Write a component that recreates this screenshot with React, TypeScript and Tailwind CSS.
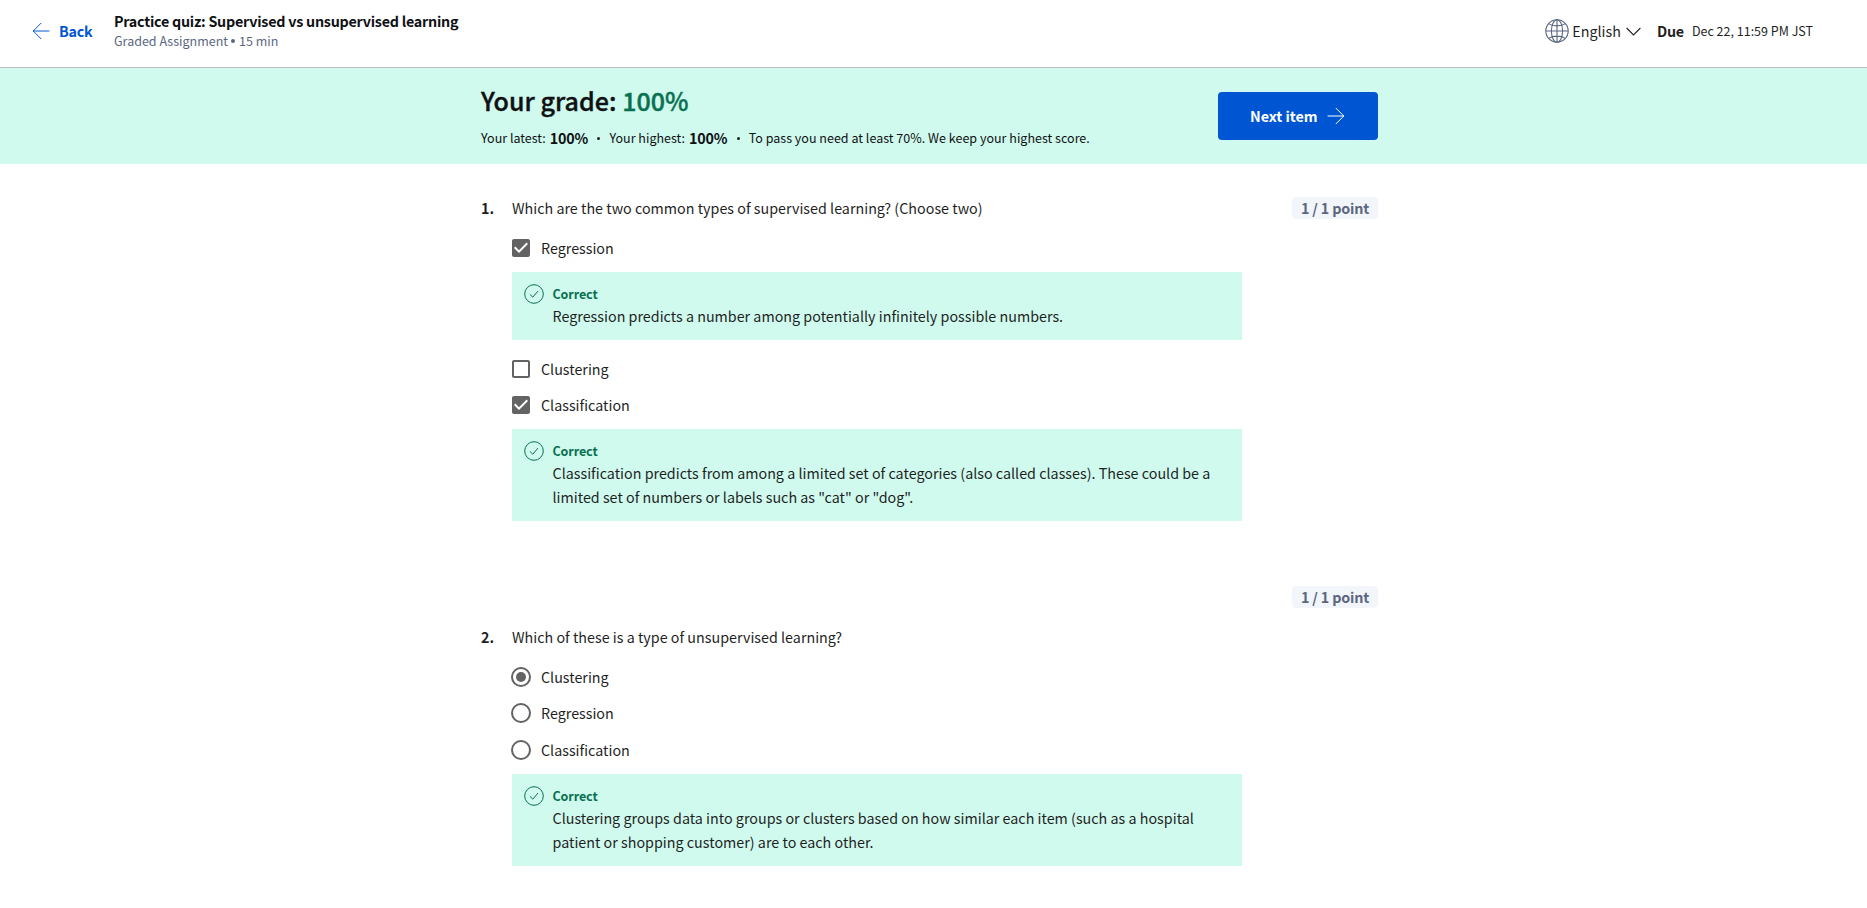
import type { ReactNode } from "react";

const GRAY = "#636363";

function CheckboxIcon({ checked }: { checked: boolean }) {
  return (
    <svg className="-ml-[3px] size-6 shrink-0" viewBox="0 0 24 24" fill={GRAY}>
      {checked ? (
        <path d="M19 3H5c-1.11 0-2 .9-2 2v14c0 1.1.89 2 2 2h14c1.11 0 2-.9 2-2V5c0-1.1-.89-2-2-2zm-9 14l-5-5 1.41-1.41L10 14.17l7.59-7.59L19 8l-9 9z" />
      ) : (
        <path d="M19 5v14H5V5h14m0-2H5c-1.1 0-2 .9-2 2v14c0 1.1.9 2 2 2h14c1.1 0 2-.9 2-2V5c0-1.1-.9-2-2-2z" />
      )}
    </svg>
  );
}

function RadioIcon({ checked }: { checked: boolean }) {
  return (
    <svg className="-ml-[3px] size-6 shrink-0" viewBox="0 0 24 24">
      <circle cx="12" cy="12" r="9" fill="none" stroke={GRAY} strokeWidth="2" />
      {checked && <circle cx="12" cy="12" r="5" fill={GRAY} />}
    </svg>
  );
}

function GlobeIcon() {
  return (
    <svg className="size-6" viewBox="0 0 24 24" fill="none" stroke="#5b6780" strokeWidth="1.1">
      <circle cx="12" cy="12" r="11.2" />
      <ellipse cx="12" cy="12" rx="5.6" ry="11.2" />
      <path d="M12 .8v22.4M.8 12h22.4M3.6 4.6C6 6.2 9 6.9 12 6.9s6-.7 8.4-2.3M3.6 19.4c2.4-1.6 5.4-2.3 8.4-2.3s6 .7 8.4 2.3" />
    </svg>
  );
}

function ArrowLeft() {
  return (
    <svg className="h-[18px] w-[18px]" viewBox="0 0 18 18" fill="none" stroke="currentColor">
      <path d="M9.2 1L1.2 9l8 8" strokeWidth="1" />
      <path d="M1.2 9H17.4" strokeWidth="1" />
    </svg>
  );
}

function ArrowRight() {
  return (
    <svg className="h-[18px] w-[18px]" viewBox="0 0 18 18" fill="none" stroke="currentColor">
      <path d="M8.8 1l8 8-8 8" strokeWidth="1" />
      <path d="M.6 9h16.2" strokeWidth="1" />
    </svg>
  );
}

function Option({ icon, children }: { icon: ReactNode; children: ReactNode }) {
  return (
    <label className="flex h-6 items-center gap-2">
      {icon}
      <span>{children}</span>
    </label>
  );
}

function Feedback({ children }: { children: ReactNode }) {
  return (
    <div className="flex gap-[8.5px] bg-[#cffaed] py-3 pr-6 pl-3">
      <svg className="size-5 shrink-0" viewBox="0 0 20 20" fill="none" stroke="#087051">
        <circle cx="10" cy="10" r="9.3" strokeWidth="1" />
        <path d="M5.9 10.3l2.9 2.9 5.1-6.1" strokeWidth="1" />
      </svg>
      <div>
        <div className="h-5 text-[12.5px] leading-[19px] font-bold tracking-[-0.1px] text-[#087051]">Correct</div>
        <p className="tracking-[0.01px]">{children}</p>
      </div>
    </div>
  );
}

function Points() {
  return (
    <div className="flex h-[22px] w-[86px] items-center justify-center rounded bg-[#f2f5fa] text-[14.3px] font-bold tracking-[-0.15px] text-[#5b6780]">
      1 / 1 point
    </div>
  );
}

function Dot() {
  return <span className="size-[3px] rounded-full bg-[#1f1f1f]" />;
}

export default function App() {
  return (
    <div className="h-[908px] overflow-hidden bg-white font-['Noto_Sans_CJK_SC',sans-serif] text-[14.3px] leading-6 text-[#1f1f1f]">
      <header className="flex h-[68px] items-start border-b border-[#bdbdbd] pr-[54px] pl-8">
        <a className="mt-[19px] flex h-6 items-center text-[#0056d2]">
          <ArrowLeft />
          <span className="ml-[9px] w-[55px] font-bold tracking-[-0.25px]">Back</span>
        </a>
        <div className="mt-[11px]">
          <h1 className="leading-5 font-bold tracking-[-0.24px] whitespace-nowrap text-[#0f1114]">
            Practice quiz: Supervised vs unsupervised learning
          </h1>
          <p className="flex items-center gap-[3.5px] text-[12.5px] leading-[19px] text-[#5b6780]">
            <span>Graded Assignment</span>
            <span className="size-1 rounded-full bg-[#5b6780]" />
            <span>15 min</span>
          </p>
        </div>
        <div className="mt-[19px] ml-auto flex h-6 items-center">
          <GlobeIcon />
          <span className="ml-[3px]">English</span>
          <svg className="ml-[5px] h-[9px] w-[15px]" viewBox="0 0 15 9" fill="none" stroke="#1f1f1f" strokeWidth="1.1">
            <path d="M.6 1l6.9 6.9L14.4 1" />
          </svg>
          <span className="ml-4 font-bold tracking-[-0.2px]">Due</span>
          <span className="ml-2 text-[12.5px]">Dec 22, 11:59 PM JST</span>
        </div>
      </header>

      <section className="h-24 bg-[#cffaed] pr-2">
        <div className="mx-auto flex h-full w-[897px] items-center justify-between">
          <div className="pb-0.5">
            <h2 className="text-[25px] leading-9 font-medium tracking-[0.05px] text-[#0f1114] [-webkit-text-stroke:0.4px]">
              Your grade: <span className="text-[#087051]">100%</span>
            </h2>
            <div className="mt-[10px] flex items-center text-[12.5px] leading-5 text-[#0f1114]">
              <span>Your latest:</span>
              <b className="ml-1 text-[14.3px] tracking-[-0.2px]">100%</b>
              <span className="mr-[9px] ml-[9.5px] flex"><Dot /></span>
              <span>Your highest:</span>
              <b className="ml-1 text-[14.3px] tracking-[-0.2px]">100%</b>
              <span className="mr-[9px] ml-[9.5px] flex"><Dot /></span>
              <span className="tracking-[0.015px]">To pass you need at least 70%. We keep your highest score.</span>
            </div>
          </div>
          <button className="flex h-12 w-40 items-center rounded bg-[#0056d2] pl-8 font-bold text-white">
            <span className="w-[77px] text-left tracking-[-0.05px]">Next item</span>
            <ArrowRight />
          </button>
        </div>
      </section>

      <main className="pr-2">
        <div className="mx-auto w-[897px] pt-8">
          <section className="flex">
            <div className="w-[31px] font-bold">1.</div>
            <div className="w-[730px]">
              <p className="tracking-[0.01px]">Which are the two common types of supervised learning? (Choose two)</p>
              <div className="mt-4 flex flex-col gap-3">
                <Option icon={<CheckboxIcon checked />}>Regression</Option>
                <Feedback>Regression predicts a number among potentially infinitely possible numbers.</Feedback>
              </div>
              <div className="mt-[17px] flex flex-col gap-3">
                <Option icon={<CheckboxIcon checked={false} />}>Clustering</Option>
                <Option icon={<CheckboxIcon checked />}>Classification</Option>
                <Feedback>
                  Classification predicts from among a limited set of categories (also called classes). These could be a
                  <br />
                  limited set of numbers or labels such as "cat" or "dog".
                </Feedback>
              </div>
            </div>
            <div className="mt-px ml-auto">
              <Points />
            </div>
          </section>

          <section className="mt-[65px]">
            <div className="flex justify-end">
              <Points />
            </div>
            <div className="mt-[17px] flex">
              <div className="w-[31px] font-bold">2.</div>
              <div className="w-[730px]">
                <p className="tracking-[0.01px]">Which of these is a type of unsupervised learning?</p>
                <div className="mt-4 flex flex-col gap-3">
                  <Option icon={<RadioIcon checked />}>Clustering</Option>
                  <Option icon={<RadioIcon checked={false} />}>Regression</Option>
                  <div className="pt-px">
                    <Option icon={<RadioIcon checked={false} />}>Classification</Option>
                  </div>
                  <Feedback>
                    Clustering groups data into groups or clusters based on how similar each item (such as a hospital
                    <br />
                    patient or shopping customer) are to each other.
                  </Feedback>
                </div>
              </div>
            </div>
          </section>
        </div>
      </main>
    </div>
  );
}
